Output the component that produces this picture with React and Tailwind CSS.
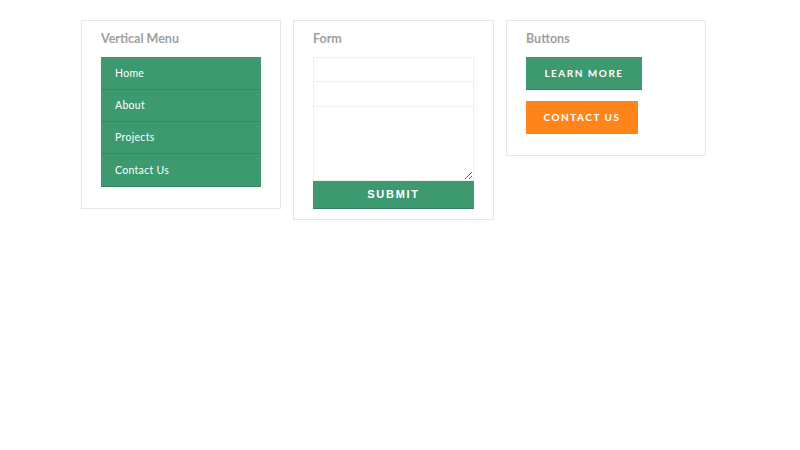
const menu = ['Home', 'About', 'Projects', 'Contact Us']

function Card({ title, children, className = '' }) {
  return (
    <div className={`w-[200px] border border-[#e6e6e6] bg-white pl-[19px] pr-5 pt-[9px] ${className}`}>
      <h2 className="text-[12.5px] font-bold text-[#a0a0a0] leading-[16px] mb-[10px] pt-[1px]">{title}</h2>
      {children}
    </div>
  )
}

export default function App() {
  return (
    <div className="min-h-[450px] bg-white font-['Lato',sans-serif]">
      <div className="flex items-start gap-3 pl-[81px] pt-5">
        {/* Vertical menu */}
        <Card title="Vertical Menu" className="pb-[21px]">
          <ul className="w-40 bg-[#3d9970] border-b border-[#37885f]">
            {menu.map((m, i) => (
              <li
                key={m}
                className={`flex items-center px-[14px] pt-[1px] text-[10.5px] tracking-[0.3px] text-white ${i === menu.length - 1 ? 'h-[33px]' : 'h-8'} ${i > 0 ? 'border-t border-[#37895f]' : ''}`}
              >
                {m}
              </li>
            ))}
          </ul>
        </Card>

        {/* Form */}
        <Card title="Form" className="w-[201px] pb-[10px]">
          <div className="w-[161px] flex flex-col">
            <input className="h-[25px] border border-[#eeeeee] outline-none" />
            <input className="h-[25px] border border-[#eeeeee] border-t-0 outline-none" />
            <textarea className="h-[74px] border border-[#eeeeee] border-t-0 outline-none resize-y" />
            <button className="h-[28px] bg-[#3d9970] border-b border-[#357f5e] text-white text-[11px] font-bold tracking-[1.7px] font-['Liberation_Sans',sans-serif]">
              SUBMIT
            </button>
          </div>
        </Card>

        {/* Buttons */}
        <Card title="Buttons" className="pb-[21px]">
          <div className="flex flex-col items-start gap-[11px]">
            <button className="w-[116px] h-[33px] bg-[#3d9970] border-b border-[#357f5e] text-white text-[10px] font-bold tracking-[1.5px]">
              LEARN MORE
            </button>
            <button className="w-[112px] h-[33px] bg-[#ff851b] text-white text-[10px] font-bold tracking-[1.5px]">
              CONTACT US
            </button>
          </div>
        </Card>
      </div>
    </div>
  )
}
